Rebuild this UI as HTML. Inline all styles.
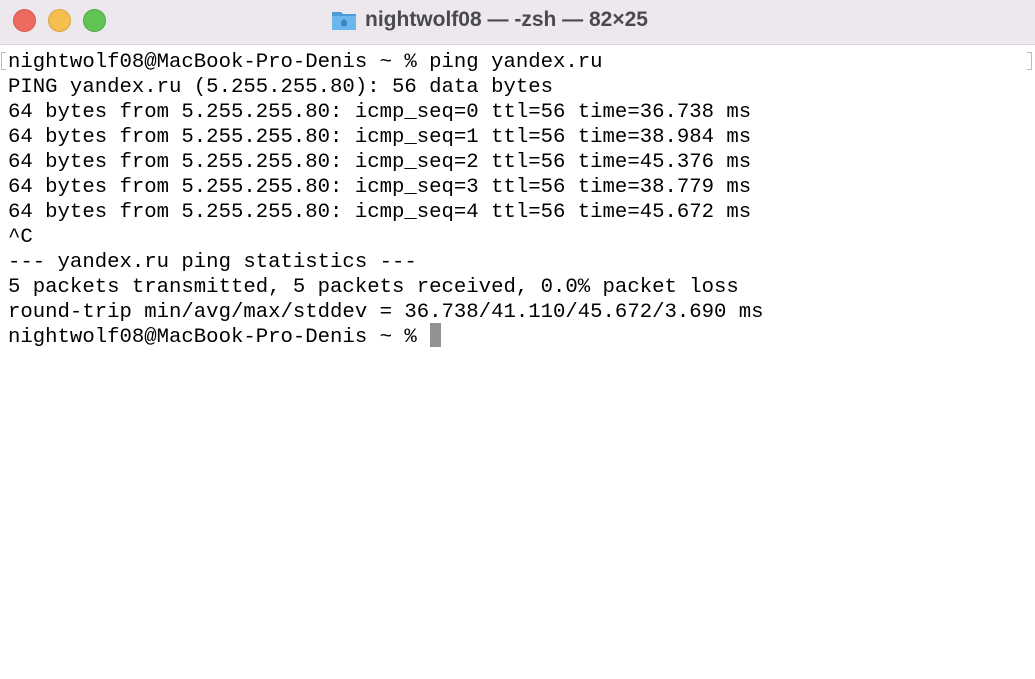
<!DOCTYPE html>
<html><head><style>
html,body{margin:0;padding:0;width:1035px;height:679px;overflow:hidden;background:#fff}
.tb{position:absolute;left:0;top:0;width:1035px;height:44px;background:#ede7ee;border-bottom:1px solid #d6d1d6}
.d{position:absolute;top:9px;width:21px;height:21px;border-radius:50%}
.title{position:absolute;left:365px;top:8px;font:bold 21px "Liberation Sans",sans-serif;color:#4a4a4e}
pre{position:absolute;left:8px;top:50px;margin:0;font:20.65px/25px "Liberation Mono",monospace;color:#000}
.cur{position:absolute;left:430px;top:323px;width:11px;height:24px;background:#929292}
.br{position:absolute;top:52px;width:4px;height:16px;border:1px solid #bbb}
</style></head><body>
<div class="tb">
<div class="d" style="left:13px;background:#ed6a5e;border:0.5px solid #d55a4f"></div>
<div class="d" style="left:48px;background:#f5bf4f;border:0.5px solid #d9a53f"></div>
<div class="d" style="left:83px;background:#61c554;border:0.5px solid #50a845"></div>
<svg style="position:absolute;left:331px;top:9px" width="26" height="22" viewBox="0 0 26 22"><path d="M1 3h9l2 2h13v16H1z" fill="#4e9bdb"/><path d="M1 7h24v14H1z" fill="#6cb6ee"/><path d="M13 10l-4 3.5h1.2V17h5.6v-3.5H17z" fill="#3d82c4"/></svg>
<div class="title">nightwolf08 — -zsh — 82×25</div>
</div>
<div class="br" style="left:1px;border-right:0"></div>
<div class="br" style="left:1027px;border-left:0"></div>
<pre>nightwolf08@MacBook-Pro-Denis ~ % ping yandex.ru
PING yandex.ru (5.255.255.80): 56 data bytes
64 bytes from 5.255.255.80: icmp_seq=0 ttl=56 time=36.738 ms
64 bytes from 5.255.255.80: icmp_seq=1 ttl=56 time=38.984 ms
64 bytes from 5.255.255.80: icmp_seq=2 ttl=56 time=45.376 ms
64 bytes from 5.255.255.80: icmp_seq=3 ttl=56 time=38.779 ms
64 bytes from 5.255.255.80: icmp_seq=4 ttl=56 time=45.672 ms
^C
--- yandex.ru ping statistics ---
5 packets transmitted, 5 packets received, 0.0% packet loss
round-trip min/avg/max/stddev = 36.738/41.110/45.672/3.690 ms
nightwolf08@MacBook-Pro-Denis ~ % </pre>
<div class="cur"></div>
</body></html>
